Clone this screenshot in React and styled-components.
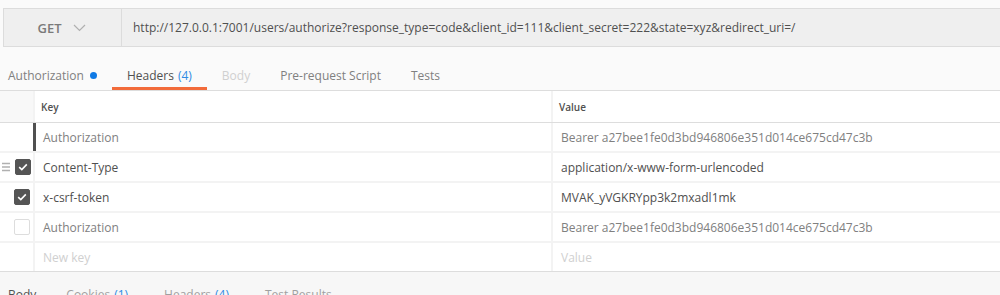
import styled, {createGlobalStyle} from 'styled-components';

const GlobalStyle = createGlobalStyle`
    body {
        margin: 0;
        background: #fafafa;
        font-family: 'Open Sans', 'Liberation Sans', sans-serif;
        overflow: hidden;
    }
`;

const Page = styled.div`
    width: 1000px;
    height: 295px;
    overflow: hidden;
    display: flex;
    flex-direction: column;

    & > * {
        flex-shrink: 0;
    }
`;

const UrlBar = styled.div`
    display: flex;
    align-items: stretch;
    height: 37px;
    margin: 8px -10px 0 3px;
    border: 1px solid #dcdcdc;
    background: #efefef;
`;

const Method = styled.div`
    width: 115px;
    flex: none;
    display: flex;
    align-items: center;
    justify-content: center;
    gap: 11px;
    border-right: 1px solid #dcdcdc;
    font-size: 13px;
    font-weight: 600;
    color: #7a7a7a;
    padding-right: 2px;
`;

const Url = styled.div`
    display: flex;
    align-items: center;
    padding-left: 11px;
    font-size: 12px;
    color: #505050;
    white-space: nowrap;
`;

const TabBar = styled.div`
    display: flex;
    height: 30px;
    margin-top: 13px;
    border-bottom: 1px solid #dddddd;
`;

const Tab = styled.div`
    position: relative;
    display: flex;
    align-items: center;
    gap: 6px;
    padding: 0 15px;
    font-size: 12px;
    color: ${p => (p.$disabled ? '#d0d0d0' : p.$active ? '#505050' : '#808080')};
    white-space: nowrap;

    &:first-child {
        padding-left: 8px;
    }

    ${p =>
        p.$active &&
        `&:after {
            content: '';
            position: absolute;
            left: 0;
            right: 0;
            bottom: 0;
            height: 3px;
            background: #f26b3a;
        }`}
`;

const Count = styled.span`
    color: #2f8ce4;
    margin-left: 4px;
`;

const Dot = styled.span`
    width: 7px;
    height: 7px;
    border-radius: 50%;
    background: #0f7ae5;
`;

const Table = styled.div`
    display: flex;
    flex-direction: column;
    gap: 2px;
    background: #f3f3f3;
    border-bottom: 1px solid #dddddd;
`;

const Row = styled.div`
    display: grid;
    grid-template-columns: 33px 516px 1fr;
    column-gap: 2px;
    height: ${p => (p.$head ? '31px' : '28px')};
    ${p => p.$head && 'border-bottom: 1px solid #dddddd; margin-bottom: -2px;'}
`;

const Gutter = styled.div`
    background: ${p => (p.$head ? '#f8f8f8' : '#ffffff')};
    display: flex;
    align-items: center;
    gap: 5px;
    padding-left: ${p => (p.$handle ? '2px' : '14px')};
`;

const Cell = styled.div`
    background: #ffffff;
    display: flex;
    align-items: center;
    padding-left: ${p => (p.$head ? '6px' : '8px')};
    font-size: ${p => (p.$head ? '10px' : '12px')};
    font-weight: ${p => (p.$head ? 600 : 400)};
    color: ${p =>
        p.$head ? '#505050' : p.$placeholder ? '#d0d0d0' : p.$muted ? '#808080' : '#505050'};
    white-space: nowrap;
    ${p => p.$focus && 'box-shadow: -2px 0 0 #505050, inset 1px 0 0 #505050;'}
`;

const Box = styled.span`
    width: 16px;
    height: 16px;
    box-sizing: border-box;
    border-radius: 2px;
    display: flex;
    align-items: center;
    justify-content: center;
    background: ${p => (p.$checked ? '#555555' : '#ffffff')};
    border: 1px solid ${p => (p.$checked ? '#555555' : '#dddddd')};
`;

const Footer = styled.div`
    flex: 1;
    background: #f7f7f7;
    display: flex;
    padding-top: 14px;
`;

const FooterTab = styled.div`
    font-size: 12px;
    padding: 0 18px;
    color: ${p => (p.$active ? '#505050' : '#a0a0a0')};
    white-space: nowrap;

    &:first-child {
        padding-left: 8px;
        padding-right: 12px;
    }
`;

const Chevron = () => (
    <svg width="13" height="8" viewBox="0 0 13 8">
        <path d="M1 1l5.5 5.5L12 1" fill="none" stroke="#b0b0b0" strokeWidth="1.2" />
    </svg>
);

const Check = () => (
    <svg width="10" height="8" viewBox="0 0 10 8">
        <path d="M1.2 4.2l2.6 2.4L8.8 1.4" fill="none" stroke="#ffffff" strokeWidth="1.6" />
    </svg>
);

const Handle = () => (
    <svg width="8" height="10" viewBox="0 0 8 10">
        <path d="M0 1.5h8M0 5h8M0 8.5h8" stroke="#b0b0b0" strokeWidth="1.4" />
    </svg>
);

const rows = [
    {key: 'Authorization', value: 'Bearer a27bee1fe0d3bd946806e351d014ce675cd47c3b', muted: true, focus: true},
    {key: 'Content-Type', value: 'application/x-www-form-urlencoded', checked: true, handle: true},
    {key: 'x-csrf-token', value: 'MVAK_yVGKRYpp3k2mxadl1mk', checked: true},
    {key: 'Authorization', value: 'Bearer a27bee1fe0d3bd946806e351d014ce675cd47c3b', muted: true, box: true},
];

const App = () => {
    return (
        <Page>
            <GlobalStyle />
            <UrlBar>
                <Method>
                    GET
                    <Chevron />
                </Method>
                <Url>
                    http://127.0.0.1:7001/users/authorize?response_type=code&amp;client_id=111&amp;client_secret=222&amp;state=xyz&amp;redirect_uri=/
                </Url>
            </UrlBar>

            <TabBar>
                <Tab>
                    Authorization <Dot />
                </Tab>
                <Tab $active>
                    <span>
                        Headers<Count>(4)</Count>
                    </span>
                </Tab>
                <Tab $disabled>Body</Tab>
                <Tab>Pre-request Script</Tab>
                <Tab>Tests</Tab>
            </TabBar>

            <Table>
                <Row $head>
                    <Gutter $head />
                    <Cell $head>Key</Cell>
                    <Cell $head>Value</Cell>
                </Row>
                {rows.map((r, i) => (
                    <Row key={i}>
                        <Gutter $handle={r.handle}>
                            {r.handle && <Handle />}
                            {(r.checked || r.box) && (
                                <Box $checked={r.checked}>{r.checked && <Check />}</Box>
                            )}
                        </Gutter>
                        <Cell $muted={r.muted} $focus={r.focus}>
                            {r.key}
                        </Cell>
                        <Cell $muted={r.muted}>{r.value}</Cell>
                    </Row>
                ))}
                <Row>
                    <Gutter />
                    <Cell $placeholder>New key</Cell>
                    <Cell $placeholder>Value</Cell>
                </Row>
            </Table>

            <Footer>
                <FooterTab $active>Body</FooterTab>
                <FooterTab>
                    Cookies<Count>(1)</Count>
                </FooterTab>
                <FooterTab>
                    Headers<Count>(4)</Count>
                </FooterTab>
                <FooterTab>Test Results</FooterTab>
            </Footer>
        </Page>
    );
};

export default App;
